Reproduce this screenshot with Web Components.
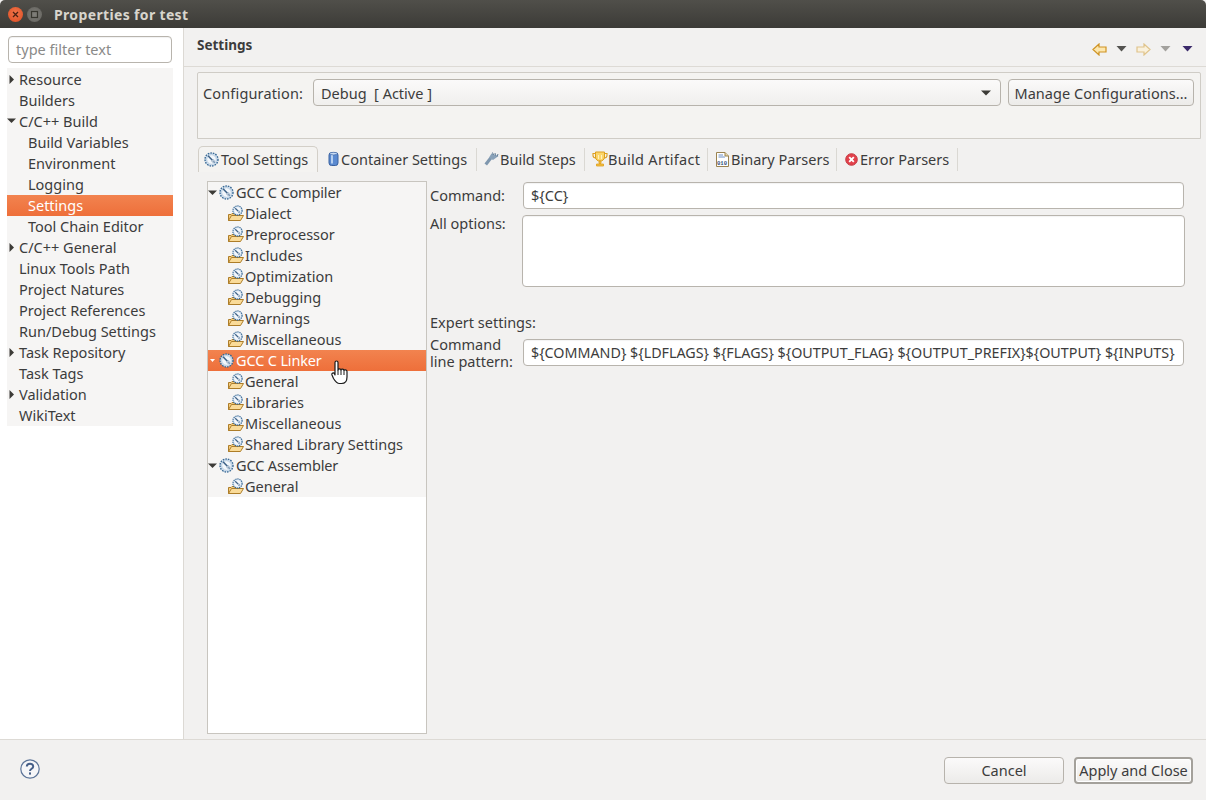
<!DOCTYPE html>
<html>
<head>
<meta charset="utf-8">
<title>Properties for test</title>
<style>
  html, body { margin: 0; height: 100%; overflow: hidden; }
  body { background: #f2f1f0; color: #3c3c3c; font: 14.5px "Noto Sans", "Open Sans", sans-serif; }
</style>
</head>
<body>
<app-window></app-window>

<script>
// Small icons used by the tree rows and tabs
const gear = `<svg width="15" height="15" viewBox="0 0 15 15" style="display:block">
  <circle cx="7.5" cy="7.5" r="6.5" fill="#d6e4f2" stroke="#3a6a96" stroke-width="1.4" stroke-dasharray="1.6 1"/>
  <circle cx="7.5" cy="7.5" r="4.8" fill="#f3f7fb" stroke="#9db8d2" stroke-width=".6"/>
  <path d="M4 3.8 L8.4 8.2" stroke="#3e6288" stroke-width="1.6"/>
  <path d="M7.6 9.6 L10.6 10.6 M9.6 7.4 L10.6 10.6 M8.8 8.6 L10.6 10.6" stroke="#6f8dac" stroke-width=".8"/>
</svg>`;

const folder = `<svg width="16" height="17" viewBox="0 0 16 17" style="display:block">
  <path d="M.5 15.5 V9.5 H3 L4 8.5 H7 V15.5 Z" fill="#f5cd7f" stroke="#ad7d28"/>
  <path d="M.5 15.5 L3.5 10.5 H15.5 L12.5 15.5 Z" fill="#fadb98" stroke="#ad7d28"/>
  <circle cx="9.5" cy="5.5" r="4.6" fill="#d6e4f2" stroke="#3a6a96" stroke-width="1.2" stroke-dasharray="1.3 .8"/>
  <circle cx="9.5" cy="5.5" r="3.2" fill="#f3f7fb"/>
  <path d="M7.2 3.2 L10.4 6.4" stroke="#3e6288" stroke-width="1.3"/>
  <path d="M10 7.4 L11.6 7.6 M11.4 5.8 L11.6 7.6" stroke="#6f8dac" stroke-width=".7"/>
</svg>`;

const icons = {
  gear,
  folder,
  can: `<svg width="11" height="16" viewBox="0 0 11 16" style="display:block">
    <rect x="1" y="1.5" width="9" height="13" rx="2.6" fill="#5b8ad0" stroke="#3a62a0"/>
    <rect x="3" y="3.5" width="2" height="9" fill="#b7d0f0"/>
    <ellipse cx="5.5" cy="2.6" rx="3.6" ry="1.3" fill="#c9dcf4" stroke="#3a62a0" stroke-width=".6"/>
  </svg>`,
  hammer: `<svg width="15" height="14" viewBox="0 0 15 14" style="display:block">
    <path d="M.5 11.5 L3 13.5 L8 7 L5.5 5 Z" fill="#7f97ae"/>
    <path d="M5 5.5 L7.5 1.5 L14.5 4 L9 8 Z" fill="#8aa2b9"/>
    <path d="M8.5 .5 L9.5 3 M11 1 L11.5 3.5 M14 2 L13 4.5" stroke="#5f7a94" stroke-width="1"/>
  </svg>`,
  trophy: `<svg width="16" height="16" viewBox="0 0 16 16" style="display:block">
    <path d="M3.5 1 H12.5 V6 C12.5 9 10 10 8 10 C6 10 3.5 9 3.5 6 Z" fill="#fbd56a" stroke="#dd9f1e"/>
    <path d="M3.5 2.5 H1 V4.5 C1 6 2.5 7 4 7 M12.5 2.5 H15 V4.5 C15 6 13.5 7 12 7" fill="none" stroke="#dd9f1e" stroke-width="1.1"/>
    <path d="M6.5 4 V8 M9.5 4 V8" stroke="#fff1bf" stroke-width="1"/>
    <path d="M7 10 H9 V12.5 H7 Z M4.5 13 H11.5 V15 H4.5 Z" fill="#f5c040" stroke="#dd9f1e" stroke-width=".8"/>
  </svg>`,
  binary: `<svg width="13" height="15" viewBox="0 0 13 15" style="display:block">
    <path d="M.5 .5 H9 L12.5 4 V14.5 H.5 Z" fill="#fff" stroke="#9a8350"/>
    <path d="M9 .5 V4 H12.5" fill="#e8d9a8" stroke="#9a8350"/>
    <path d="M2.5 3 H7 M2.5 5 H9" stroke="#6d8fc4"/>
    <text x="1" y="12.5" font-family="Liberation Mono" font-size="5.6" font-weight="700" fill="#33507c">010</text>
  </svg>`,
  error: `<svg width="13" height="13" viewBox="0 0 13 13" style="display:block">
    <circle cx="6.5" cy="6.5" r="5.8" fill="#e2414b" stroke="#c43a42"/>
    <path d="M4.2 4.2 L8.8 8.8 M8.8 4.2 L4.2 8.8" stroke="#fff" stroke-width="1.9"/>
  </svg>`
};

class TitleBar extends HTMLElement {
  constructor() {
    super();
    this.attachShadow({ mode: 'open' });
    this.shadowRoot.innerHTML = `
      <style>
        :host {
          display: flex; align-items: center; height: 28px; flex: none; box-sizing: border-box;
          padding-left: 8px; gap: 4px;
          background: linear-gradient(#504f4a, #3c3b37);
          border-radius: 5px 5px 0 0;
        }
        .btn { width: 15px; height: 15px; border-radius: 50%; display: flex; align-items: center; justify-content: center; }
        .close { background: radial-gradient(circle at 50% 40%, #f1754a, #dd4c22); }
        .max { background: radial-gradient(circle, #807f7a, #62615c); }
        span { margin-left: 8px; color: #d8d5cd; font: bold 14px "Noto Sans", sans-serif; letter-spacing: .35px; }
      </style>
      <div class="btn close"><svg width="9" height="9" viewBox="0 0 9 9"><path d="M2 2 L7 7 M7 2 L2 7" stroke="#4c2112" stroke-width="1.3"/></svg></div>
      <div class="btn max"><svg width="9" height="9" viewBox="0 0 9 9"><rect x="1.5" y="1.5" width="6" height="6" fill="none" stroke="#37362f" stroke-width="1.2"/></svg></div>
      <span><slot></slot></span>`;
  }
}

// one line of a tree; indent/icon/arrow come from attributes
class TreeRow extends HTMLElement {
  constructor() {
    super();
    this.attachShadow({ mode: 'open' });
  }
  connectedCallback() {
    const arrow = this.getAttribute('arrow');
    const icon = this.getAttribute('icon');
    const indent = this.getAttribute('indent') || '0';
    let tri = '';
    if (arrow === 'right') tri = '<svg width="6" height="9" viewBox="0 0 6 9"><path d="M.5 0 L5 4.5 L.5 9 Z" fill="#3c3b37"/></svg>';
    if (arrow === 'down') tri = '<svg width="9" height="6" viewBox="0 0 9 6"><path d="M0 .5 H9 L4.5 5 Z" fill="#3c3b37"/></svg>';
    if (arrow === 'small') tri = '<svg width="5" height="3" viewBox="0 0 5 3"><path d="M0 0 H5 L2.5 3 Z" fill="#fff"/></svg>';
    this.shadowRoot.innerHTML = `
      <style>
        :host {
          display: flex; align-items: center; height: 21px; box-sizing: border-box;
          padding-left: ${indent}px; white-space: nowrap;
        }
        :host([selected]) {
          background: linear-gradient(#f2834f, #ee6f3a); color: #fff;
        }
        :host([icon="gear"]) { letter-spacing: -.15px; }
        .arrow { width: 9px; display: flex; justify-content: center; flex: none; margin-right: ${icon ? 2 : 3}px; }
        .icon { display: flex; margin-right: ${icon === 'gear' ? 2 : 1}px; flex: none; }
        .label { position: relative; top: -.5px; }
      </style>
      ${arrow !== null ? `<div class="arrow">${tri}</div>` : ''}
      ${icon ? `<div class="icon">${icons[icon]}</div>` : ''}
      <span class="label"><slot></slot></span>`;
  }
}

class FilterInput extends HTMLElement {
  constructor() {
    super();
    this.attachShadow({ mode: 'open' });
    this.shadowRoot.innerHTML = `
      <style>
        :host {
          display: block; box-sizing: border-box; height: 27px; margin: 8px 11px 5px 8px;
          border: 1px solid #b8b4ad; border-radius: 4px; background: #fff;
          padding: 0 7px; line-height: 25px; color: #8a8a88;
          box-shadow: inset 0 1px 1px rgba(0,0,0,.06);
        }
      </style>
      <slot></slot>`;
  }
}

class PrefSidebar extends HTMLElement {
  constructor() {
    super();
    this.attachShadow({ mode: 'open' });
    this.shadowRoot.innerHTML = `
      <style>
        :host {
          display: flex; flex-direction: column; flex: none; box-sizing: border-box;
          width: 184px; border-right: 1px solid #dcd9d4; background: #fff;
        }
        .tree { margin: 0 10px 0 7px; background: #f6f5f4; padding-top: .5px; }
      </style>
      <filter-input>type filter text</filter-input>
      <div class="tree"><slot></slot></div>`;
  }
}

class TabItem extends HTMLElement {
  constructor() {
    super();
    this.attachShadow({ mode: 'open' });
  }
  connectedCallback() {
    const w = this.getAttribute('w');
    const pad = this.getAttribute('pad');
    const gap = this.getAttribute('gap') || '2';
    this.shadowRoot.innerHTML = `
      <style>
        :host {
          display: flex; align-items: center; box-sizing: border-box; height: 26px;
          width: ${w}px; padding-left: ${pad}px; gap: ${gap}px; white-space: nowrap;
          position: relative; flex: none;
        }
        :host(:not([active]))::after {
          content: ''; position: absolute; right: 0; top: 2px; bottom: 1px; width: 1px; background: #dad8d3;
        }
        :host([active]) {
          border: 1px solid #d3cfc8; border-bottom: 0; border-radius: 5px 5px 0 0;
          background: #f4f3f1; padding-bottom: 1px;
        }
        svg { flex: none; }
      </style>
      ${icons[this.getAttribute('icon')]}
      <slot></slot>`;
  }
}

class OptionField extends HTMLElement {
  constructor() {
    super();
    this.attachShadow({ mode: 'open' });
    this.shadowRoot.innerHTML = `
      <style>
        :host {
          display: block; box-sizing: border-box; background: #fff;
          border: 1px solid #b8b4ad; border-radius: 4px; padding: 0 6px 0 7px;
          line-height: 25px; white-space: nowrap; overflow: hidden;
          box-shadow: inset 0 1px 1px rgba(0,0,0,.05);
        }
      </style>
      <slot></slot>`;
  }
}

class ToolButton extends HTMLElement {
  constructor() {
    super();
    this.attachShadow({ mode: 'open' });
    this.shadowRoot.innerHTML = `
      <style>
        :host {
          display: flex; align-items: center; justify-content: center; box-sizing: border-box;
          height: 27px; border: 1px solid #b7b3ac; border-radius: 4px;
          background: linear-gradient(#fbfafa, #ecebe9); white-space: nowrap;
        }
        :host([default]) {
          border: 2px solid #a4a19b; box-shadow: inset 0 0 0 1px #fff;
        }
      </style>
      <slot></slot>`;
  }
}

class NavArrows extends HTMLElement {
  constructor() {
    super();
    this.attachShadow({ mode: 'open' });
    const arrow = (d, fill, stroke) => `<svg width="15" height="13" viewBox="0 0 15 13"><path d="${d}" fill="${fill}" stroke="${stroke}" stroke-width="1.2"/></svg>`;
    const drop = (c) => `<svg width="11" height="6" viewBox="0 0 11 6"><path d="M.5 0 H10.5 L5.5 5.5 Z" fill="${c}"/></svg>`;
    this.shadowRoot.innerHTML = `
      <style>
        :host { display: flex; align-items: center; gap: 0; margin-right: 13px; }
        svg { display: block; }
        .d { margin: 0 9px; }
        .e { margin: 0 11px 0 9px; }
      </style>
      ${arrow('M1 6.5 L7 1 V4 H14 V9 H7 V12 Z', '#fde7ae', '#cf9322')}
      <div class="d">${drop('#545350')}</div>
      ${arrow('M14 6.5 L8 1 V4 H1 V9 H8 V12 Z', '#faf1dc', '#e0c48b')}
      <div class="e">${drop('#a3a19d')}</div>
      ${drop('#3b2a6a')}`;
  }
}

class HelpIcon extends HTMLElement {
  constructor() {
    super();
    this.attachShadow({ mode: 'open' });
    this.shadowRoot.innerHTML = `
      <style>:host { display: block; width: 20px; height: 20px; } svg { display: block; }</style>
      <svg width="20" height="20" viewBox="0 0 20 20">
        <circle cx="10" cy="10" r="9.2" fill="#f6f6f8" stroke="#5c7498" stroke-width="1.2"/>
        <path d="M6.8 7.6 C6.8 3.9 13.2 3.9 13.2 7.4 C13.2 9.8 10 9.6 10 12" fill="none" stroke="#465f88" stroke-width="2"/>
        <rect x="9" y="13.4" width="2" height="2.2" fill="#465f88"/>
      </svg>`;
  }
}

class HandCursor extends HTMLElement {
  constructor() {
    super();
    this.attachShadow({ mode: 'open' });
    this.shadowRoot.innerHTML = `
      <style>:host { position: absolute; width: 18px; height: 25px; } svg { display: block; }</style>
      <svg width="18" height="25" viewBox="0 0 18 25">
        <path d="M4 2.5 C4 .5 7 .5 7 2.5 V10 C7 8.5 10 8.5 10 10 C10 8.8 13 8.8 13 10.5 C13 9.5 16 9.5 16 11.5 V17 C16 21 14 23.5 10.5 23.5 H8.5 C5.5 23.5 4 21 2.5 18.5 L1 15 C.3 13 2.6 12.2 3.6 14 L4 15 Z"
          fill="#fff" stroke="#1a1a1a" stroke-width="1.2" stroke-linejoin="round"/>
        <path d="M7 10 V15 M10 10 V15 M13 10.5 V15" stroke="#1a1a1a" stroke-width="1"/>
      </svg>`;
  }
}

class SettingsPanel extends HTMLElement {
  constructor() {
    super();
    this.attachShadow({ mode: 'open' });
    this.shadowRoot.innerHTML = `
      <style>
        :host { display: flex; flex-direction: column; flex: 1; min-width: 0; position: relative; background: #f2f1f0; }
        header {
          display: flex; justify-content: space-between; align-items: center; height: 39px;
          box-sizing: border-box; border-bottom: 1px solid #dddad5; padding-left: 13px;
        }
        h1 { margin: 0; font: bold 13.5px "Noto Sans", sans-serif; position: relative; top: -2px; }
        nav-arrows { position: relative; top: 2px; }
        .config {
          box-sizing: border-box; height: 67px; margin: 5px 5px 0 13px;
          border: 1px solid #cfccc6; border-radius: 2px 2px 0 0;
          display: flex; align-items: flex-start; padding: 6px 6px 0 5px;
          background: #f4f3f1;
        }
        .config .lbl { line-height: 28px; width: 110px; flex: none; letter-spacing: .15px; }
        .select {
          flex: 1; height: 27px; box-sizing: border-box; border: 1px solid #b7b3ac; border-radius: 4px;
          background: linear-gradient(#fbfafa, #f0efed); display: flex; align-items: center;
          justify-content: space-between; padding: 0 9px 0 7px; margin-right: 7px;
        }
        .manage { width: 186px; letter-spacing: .05px; }
        .tabs { display: flex; margin: 6px 0 0 14px; height: 27px; align-items: flex-end; }
        .body { flex: 1; display: flex; margin: 9px 0 5px 23px; min-height: 0; }
        .tree {
          width: 220px; flex: none; box-sizing: border-box; background: #fff;
          border: 1px solid #c8c5bf;
        }
        .opts {
          flex: 1; display: grid; grid-template-columns: 92px 1fr; align-content: start;
          padding: 1px 21px 0 3px; column-gap: 0;
        }
        .lb { line-height: 26px; }
        .lb2 { line-height: 17px; padding-top: 4px; }
        option-field { height: 27px; }
        option-field.cmd { margin-left: 1px; margin-right: 1px; }
        option-field.all { height: 72px; margin-top: 6px; }
        .all-lb { margin-top: 5px; line-height: 18px; }
        .expert { grid-column: 1 / 3; margin-top: 25px; line-height: 20px; }
        .pat { margin-top: 7px; font-size: 14.3px; }
      </style>
      <header><h1>Settings</h1><nav-arrows></nav-arrows></header>
      <div class="config">
        <span class="lbl">Configuration:</span>
        <div class="select"><span>Debug&nbsp; [ Active ]</span>
          <svg width="10" height="6" viewBox="0 0 10 6"><path d="M0 .5 H10 L5 5.5 Z" fill="#3c3b37"/></svg>
        </div>
        <tool-button class="manage">Manage Configurations...</tool-button>
      </div>
      <div class="tabs">
        <tab-item active w="120" pad="5" icon="gear">Tool Settings</tab-item>
        <tab-item w="159" pad="10" icon="can">Container Settings</tab-item>
        <tab-item w="108" pad="7" gap="1" icon="hammer">Build Steps</tab-item>
        <tab-item w="123" pad="7" gap="0" icon="trophy" style="letter-spacing:.3px">Build Artifact</tab-item>
        <tab-item w="129" pad="8" icon="binary">Binary Parsers</tab-item>
        <tab-item w="121" pad="8" icon="error">Error Parsers</tab-item>
      </div>
      <div class="body">
        <div class="tree"><slot></slot></div>
        <div class="opts">
          <div class="lb">Command:</div>
          <option-field class="cmd">\${CC}</option-field>
          <div class="all-lb">All options:</div>
          <option-field class="all"></option-field>
          <div class="expert">Expert settings:</div>
          <div class="lb2">Command<br>line pattern:</div>
          <option-field class="cmd pat">\${COMMAND} \${LDFLAGS} \${FLAGS} \${OUTPUT_FLAG} \${OUTPUT_PREFIX}\${OUTPUT} \${INPUTS}</option-field>
        </div>
      </div>
      <hand-cursor style="left:147px;top:332px"></hand-cursor>`;
  }
}

class AppWindow extends HTMLElement {
  constructor() {
    super();
    this.attachShadow({ mode: 'open' });
    const side = [
      ['Resource', 'right', 0], ['Builders', '', 0], ['C/C++ Build', 'down', 0],
      ['Build Variables', null, 21], ['Environment', null, 21], ['Logging', null, 21],
      ['Settings', null, 21, true], ['Tool Chain Editor', null, 21],
      ['C/C++ General', 'right', 0], ['Linux Tools Path', '', 0], ['Project Natures', '', 0],
      ['Project References', '', 0], ['Run/Debug Settings', '', 0], ['Task Repository', 'right', 0],
      ['Task Tags', '', 0], ['Validation', 'right', 0], ['WikiText', '', 0]
    ].map(([t, a, ind, sel]) =>
      `<tree-row ${a === null ? '' : `arrow="${a}"`} indent="${ind}" ${sel ? 'selected' : ''}>${t}</tree-row>`).join('');
    const parent = (t, sel) => `<tree-row arrow="${sel ? 'small' : 'down'}" icon="gear" ${sel ? 'selected' : ''}>${t}</tree-row>`;
    const child = (t) => `<tree-row icon="folder" indent="20">${t}</tree-row>`;
    const tool = parent('GCC C Compiler') +
      ['Dialect', 'Preprocessor', 'Includes', 'Optimization', 'Debugging', 'Warnings', 'Miscellaneous'].map(child).join('') +
      parent('GCC C Linker', true) +
      ['General', 'Libraries', 'Miscellaneous', 'Shared Library Settings'].map(child).join('') +
      parent('GCC Assembler') + child('General');
    this.shadowRoot.innerHTML = `
      <style>
        :host { display: flex; flex-direction: column; height: 800px; }
        main { flex: 1; display: flex; min-height: 0; }
        .wrap { background: #f6f5f4; }
        footer {
          flex: none; height: 61px; box-sizing: border-box; border-top: 1px solid #dddad5;
          display: flex; align-items: center; padding: 0 13px 0 20px; gap: 10px; background: #f2f1f0;
        }
        help-icon { margin-right: auto; position: relative; top: -1px; }
        footer tool-button { width: 120px; }
        footer tool-button[default] { width: 119px; }
      </style>
      <title-bar>Properties for test</title-bar>
      <main>
        <pref-sidebar>${side}</pref-sidebar>
        <settings-panel><div class="wrap">${tool}</div></settings-panel>
      </main>
      <footer>
        <help-icon></help-icon>
        <tool-button>Cancel</tool-button>
        <tool-button default>Apply and Close</tool-button>
      </footer>`;
  }
}

customElements.define('title-bar', TitleBar);
customElements.define('tree-row', TreeRow);
customElements.define('filter-input', FilterInput);
customElements.define('pref-sidebar', PrefSidebar);
customElements.define('tab-item', TabItem);
customElements.define('option-field', OptionField);
customElements.define('tool-button', ToolButton);
customElements.define('nav-arrows', NavArrows);
customElements.define('help-icon', HelpIcon);
customElements.define('hand-cursor', HandCursor);
customElements.define('settings-panel', SettingsPanel);
customElements.define('app-window', AppWindow);
</script>
</body>
</html>
